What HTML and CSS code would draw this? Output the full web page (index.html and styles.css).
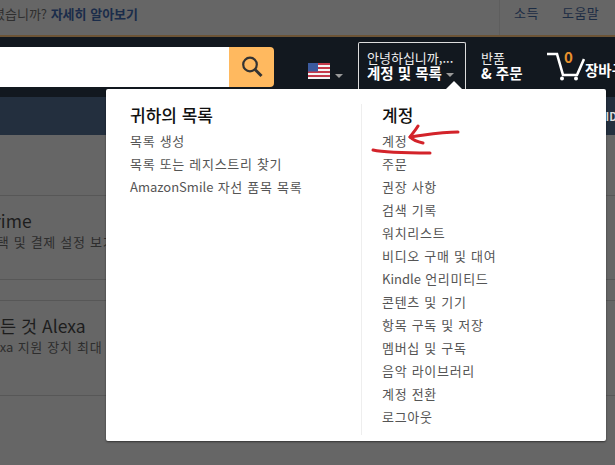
FILE: index.html
```html
<!DOCTYPE html>
<html lang="ko">
<head>
    <meta charset="UTF-8">
    <title>계정 및 목록</title>
    <link rel="stylesheet" href="styles.css">
</head>
<body>
    <div class="topbar">
        <p class="notice">셨습니까? <a href="#">자세히 알아보기</a></p>
        <div class="toplinks">
            <a href="#">소득</a>
            <a href="#">도움말</a>
        </div>
    </div>

    <header class="nav">
        <div class="search">
            <div class="search-input"></div>
            <button class="search-btn">
                <svg width="26" height="26" viewBox="0 0 26 26" fill="none" stroke="#333" stroke-width="2.2">
                    <circle cx="11" cy="10.5" r="6.8"/>
                    <path d="M16 15.5l6.5 6.5" stroke-width="3"/>
                </svg>
            </button>
        </div>
        <div class="flag-box">
            <svg width="22" height="16" viewBox="0 0 22 16">
                <rect width="22" height="16" fill="#f4f4f4"/>
                <path d="M0 1h22M0 5h22M0 9h22M0 13h22" stroke="#c4394a" stroke-width="2"/>
                <rect width="10" height="8.5" fill="#3b5a9e"/>
            </svg>
            <span class="caret"></span>
        </div>
        <a class="nav-account" href="#">
            <span class="line1">안녕하십니까,...</span>
            <span class="line2">계정 및 목록 <span class="caret"></span></span>
        </a>
        <a class="nav-orders" href="#">
            <span class="line1">반품</span>
            <span class="line2">&amp; 주문</span>
        </a>
        <a class="nav-cart" href="#">
            <svg width="39" height="30" viewBox="0 0 39 30" fill="none" stroke="#fff">
                <path d="M1 2h10l6 21h14l7-16" stroke-width="2.6"/>
                <circle cx="16" cy="26.5" r="2" fill="#fff" stroke="none"/>
                <circle cx="30" cy="26.5" r="2" fill="#fff" stroke="none"/>
            </svg>
            <span class="cart-count">0</span>
            <span class="cart-label">장바구니</span>
        </a>
    </header>

    <div class="subnav"><span class="subnav-end">ID</span></div>

    <main class="content">
        <section class="card card-prime">
            <h3>Prime</h3>
            <p>선택 및 결제 설정 보기</p>
        </section>
        <section class="card card-alexa">
            <h3>모든 것 Alexa</h3>
            <p><span class="lat">Alexa</span> 지원 장치 최대 활용</p>
        </section>
    </main>

    <div class="flyout">
        <div class="flyout-col col-lists">
            <h4>귀하의 목록</h4>
            <ul>
                <li>목록 생성</li>
                <li>목록 또는 레지스트리 찾기</li>
                <li><span class="lat">AmazonSmile</span> 자선 품목 목록</li>
            </ul>
        </div>
        <div class="flyout-col col-account">
            <h4>계정</h4>
            <ul>
                <li>계정</li>
                <li>주문</li>
                <li>권장 사항</li>
                <li>검색 기록</li>
                <li>워치리스트</li>
                <li>비디오 구매 및 대여</li>
                <li><span class="lat">Kindle</span> 언리미티드</li>
                <li>콘텐츠 및 기기</li>
                <li>항목 구독 및 저장</li>
                <li>멤버십 및 구독</li>
                <li>음악 라이브러리</li>
                <li>계정 전환</li>
                <li>로그아웃</li>
            </ul>
        </div>
    </div>
    <span class="flyout-tip"></span>

    <!-- red marker scribble on top of the screenshot -->
    <svg class="scribble" width="100" height="40" viewBox="0 0 100 40" fill="none" stroke="#d3232a" stroke-linecap="round" stroke-linejoin="round">
        <path d="M87 8C70 8 55 11 39 13" stroke-width="3"/>
        <path d="M47 2C44 7 41 10 39 13C43 17 47 18 52 19" stroke-width="3"/>
        <path d="M2 26C15 29 35 29 59 29" stroke-width="3"/>
    </svg>
</body>
</html>
```

FILE: styles.css
```css
* {
    margin: 0;
    padding: 0;
    box-sizing: border-box;
}

body {
    width: 615px;
    height: 465px;
    overflow: hidden;
    position: relative;
    background: #666;
    font-family: "Noto Sans CJK KR", "Noto Sans", sans-serif;
    color: #333;
}

a {
    text-decoration: none;
    color: inherit;
}

.lat {
    letter-spacing: 0;
}

.topbar {
    height: 37px;
    background: #666;
    border-bottom: 2px solid #6c5436;
    display: flex;
    justify-content: space-between;
    align-items: center;
    padding-bottom: 9px;
    font-size: 13px;
}

.notice {
    margin-left: -7px;
    color: #2f2f2f;
    white-space: nowrap;
}

.notice a {
    color: #1a2c4a;
    font-weight: 700;
}

.toplinks {
    height: 35px;
    margin-bottom: -9px;
    display: flex;
    flex-shrink: 0;
    align-items: center;
    gap: 23px;
    width: 116px;
    padding: 0 0 11px 14px;
    border-left: 1px solid #5e5e5e;
    color: #1c2c44;
    letter-spacing: 0.5px;
    white-space: nowrap;
}

.nav {
    height: 60px;
    background: #12181f;
    display: flex;
    align-items: flex-start;
    color: #fff;
}

.search {
    display: flex;
    flex-shrink: 0;
    width: 274px;
    height: 40px;
    margin-top: 10px;
}

.search-input {
    flex: 1;
    background: #fff;
}

.search-btn {
    width: 45px;
    border: 0;
    border-radius: 0 4px 4px 0;
    background: #ffb95f;
    display: flex;
    align-items: center;
    justify-content: center;
}

.flag-box {
    flex-shrink: 0;
    margin: 26px 0 0 34px;
    width: 50px;
    display: flex;
    align-items: flex-end;
    gap: 5px;
}

.flag-box .caret {
    margin-bottom: 1px;
}

.caret {
    display: inline-block;
    border: 4px solid transparent;
    border-top-color: #9a9a9a;
    border-bottom: 0;
    vertical-align: middle;
}

.nav-account {
    flex-shrink: 0;
    width: 108px;
    height: 52px;
    margin-top: 5px;
    padding: 7px 0 0 8px;
    border: 1px solid #ddd;
    border-bottom: 0;
    border-radius: 2px 2px 0 0;
    display: flex;
    flex-direction: column;
}

.line1 {
    font-size: 13px;
    line-height: 15px;
    white-space: nowrap;
    color: #eee;
}

.line2 {
    font-size: 14.5px;
    line-height: 16px;
    font-weight: 700;
    white-space: nowrap;
}

.nav-orders {
    flex-shrink: 0;
    margin: 13px 0 0 15px;
    width: 65px;
    display: flex;
    flex-direction: column;
}

.nav-cart {
    flex-shrink: 0;
    position: relative;
    margin-top: 15px;
    display: flex;
    align-items: flex-end;
    height: 30px;
    white-space: nowrap;
}

.cart-count {
    position: absolute;
    left: 18px;
    top: -6px;
    font-size: 15px;
    font-weight: 700;
    color: #e8912d;
}

.cart-label {
    font-size: 14.5px;
    font-weight: 700;
    line-height: 18px;
    margin-bottom: 3px;
}

.subnav {
    height: 38px;
    background: #232f3e;
    display: flex;
    justify-content: flex-end;
    align-items: center;
    font-size: 11px;
    font-weight: 700;
    color: #ddd;
}

.subnav-end {
    margin-right: -2px;
}

.content {
    height: 330px;
    color: #1d1d1d;
    overflow: hidden;
}

.card {
    border-top: 1px solid #575757;
    border-bottom: 1px solid #575757;
    white-space: nowrap;
}

.card h3 {
    font-size: 17.5px;
    font-weight: 400;
    line-height: 22px;
}

.card p {
    font-size: 13px;
    line-height: 16px;
    margin-top: 2px;
    letter-spacing: 0.7px;
    color: #2d2d2d;
}

.card-prime {
    height: 85px;
    margin-top: 60px;
    margin-bottom: 20px;
    padding-top: 14px;
}

.card-prime h3 {
    margin-left: -17px;
}

.card-prime p {
    margin-left: -16px;
}

.card-alexa {
    height: 96px;
    padding-top: 14px;
}

.card-alexa h3 {
    margin-left: -16px;
}

.card-alexa p {
    margin-left: -19px;
}

.flyout {
    position: absolute;
    left: 106px;
    top: 89px;
    width: 500px;
    height: 352px;
    background: #fff;
    border-radius: 2px;
    box-shadow: 0 1px 2px rgba(0, 0, 0, 0.5);
    display: flex;
    padding-top: 15px;
}

.flyout-col h4 {
    font-size: 17px;
    font-weight: 500;
    line-height: 22px;
    color: #111;
    margin-bottom: 3px;
}

.flyout-col ul {
    list-style: none;
}

.flyout-col li {
    font-size: 13px;
    line-height: 23px;
    letter-spacing: 0.7px;
    color: #555;
    white-space: nowrap;
}

.col-lists {
    width: 255px;
    padding-left: 24px;
}

.col-account {
    flex: 1;
    margin-bottom: 6px;
    padding-left: 20px;
    border-left: 1px solid #eee;
}

.flyout-tip {
    position: absolute;
    left: 445px;
    top: 81px;
    border: 9px solid transparent;
    border-top: 0;
    border-bottom-color: #fff;
}

.scribble {
    position: absolute;
    left: 371px;
    top: 124px;
}
```
